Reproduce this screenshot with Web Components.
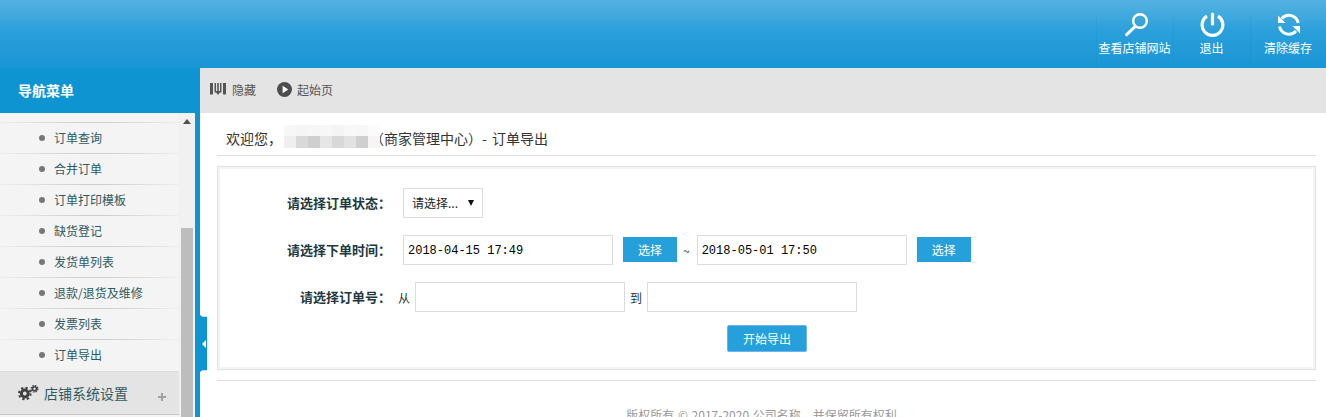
<!DOCTYPE html>
<html lang="zh-CN">
<head>
<meta charset="utf-8">
<title>订单导出</title>
<style>
html,body{margin:0;padding:0;height:417px;overflow:hidden;background:#fff;font-family:"Noto Sans CJK SC","Liberation Sans",sans-serif;}
</style>
</head>
<body>
<admin-app>
  <top-bar slot="top">
    <top-action label="查看店铺网站"><svg viewBox="0 0 26 26" width="26" height="26" fill="none" stroke="#fff"><circle cx="18" cy="9" r="6.8" stroke-width="2.4"/><path d="M12.8 14.8 4.6 22.6" stroke-width="3" stroke-linecap="round"/></svg></top-action>
    <top-action label="退出"><svg viewBox="0 0 26 26" width="26" height="26" fill="none" stroke="#fff" stroke-width="3.2"><path d="M8 4.2A10.4 10.4 0 1 0 19 4.2"/><path d="M13.5 2v10" stroke-linecap="round"/></svg></top-action>
    <top-action label="清除缓存"><svg viewBox="0 0 26 26" width="26" height="26" fill="none" stroke="#fff" stroke-width="3"><path d="M6.8 6.5A9.5 9.5 0 0 1 23.2 11"/><path d="M4.6 14.5A9.5 9.5 0 0 0 21 19"/><path d="M3 3.5V11h7.5z" fill="#fff" stroke="none"/><path d="M25 21.5V14h-7.5z" fill="#fff" stroke="none"/></svg></top-action>
  </top-bar>
  <side-bar slot="side">
    <side-item>订单查询</side-item>
    <side-item>合并订单</side-item>
    <side-item>订单打印模板</side-item>
    <side-item>缺货登记</side-item>
    <side-item>发货单列表</side-item>
    <side-item>退款/退货及维修</side-item>
    <side-item>发票列表</side-item>
    <side-item>订单导出</side-item>
    <side-group>店铺系统设置</side-group>
  </side-bar>
  <tool-bar slot="tools">
    <tool-link gap="6" pad="10"><svg viewBox="0 0 16 16" width="16" height="16" fill="#555"><path d="M0 1h3v11.5H0zM4.5 1H6v9.5H4.500zM10 1h1.500v9.500H10zM13 1h3v11.500h-3zM7.200 1h1.600v8H11l-3 4-3-4h2.200z"/></svg>隐藏</tool-link>
    <tool-link gap="5" pad="21"><svg viewBox="0 0 16 16" width="15" height="15"><circle cx="8" cy="8" r="8" fill="#4d4d4d"/><path d="M6 4l6 4-6 4z" fill="#fff"/></svg>起始页</tool-link>
  </tool-bar>
  <page-title slot="main"><mosaic-block></mosaic-block></page-title>
  <export-form slot="main">
    <form-row label="请选择订单状态：">
      <select-box>请选择...</select-box>
    </form-row>
    <form-row label="请选择下单时间：">
      <text-field value="2018-04-15 17:49"></text-field>
      <action-button style="margin-left:10px">选择</action-button>
      <plain-text style="margin:0 7px 0 6px">~</plain-text>
      <text-field value="2018-05-01 17:50"></text-field>
      <action-button style="margin-left:10px">选择</action-button>
    </form-row>
    <form-row label="请选择订单号：" tight>
      <plain-text style="margin-right:5px">从</plain-text>
      <text-field></text-field>
      <plain-text style="margin:0 5px">到</plain-text>
      <text-field></text-field>
    </form-row>
    <submit-row><action-button primary>开始导出</action-button></submit-row>
  </export-form>
  <page-footer slot="main">版权所有 © 2017-2020 公司名称，并保留所有权利</page-footer>
</admin-app>
<script>
function def(name, css, html, extra){
  customElements.define(name, class extends HTMLElement{
    constructor(){super();const r=this.attachShadow({mode:'open'});r.innerHTML='<style>'+css+'</style>'+html;}
    connectedCallback(){ if(extra) extra.call(this,this.shadowRoot); }
  });
}
def('admin-app',`
 :host{display:block;width:1326px;height:417px;overflow:hidden;position:relative}
 .body{display:flex;height:349px}
 .side{width:195px;flex:none}
 .strip{width:5px;background:#0f94d2;flex:none}
 .right{flex:1;min-width:0;display:flex;flex-direction:column}
 .main{padding:0 10px 0 17px;display:flex;flex-direction:column}
 .flap{position:absolute;left:200px;top:315px;width:7px;height:57px;background:#0f94d2;clip-path:polygon(0 0,35% 3%,100% 3%,100% 97%,35% 97%,0 100%)}
 .flap::after{content:"";position:absolute;left:2px;top:25px;border:4px solid transparent;border-right:4px solid #fff;border-left:0}
`,`<slot name="top"></slot><div class="body"><div class="side"><slot name="side"></slot></div><div class="strip"></div><div class="right"><slot name="tools"></slot><div class="main"><slot name="main"></slot></div></div></div><div class="flap"></div>`);
def('top-bar',`
 :host{display:flex;justify-content:flex-end;height:68px;background:linear-gradient(#55b2e1,#2ba0da 45%,#1a96d4);}
`,`<slot></slot>`);
def('top-action',`
 :host{display:flex;flex-direction:column;align-items:center;width:77px;height:68px;box-sizing:border-box;color:#fff;font-size:12px;padding-top:12px;background:linear-gradient(rgba(0,80,140,.07),rgba(0,80,140,.07)) left 15px/1px 53px no-repeat}
 :host(:last-child){width:76px}
 .i{height:26px;width:26px;display:block}
 .t{line-height:16px;margin-top:2px;white-space:nowrap}
`,`<div class="i"><slot></slot></div><div class="t"></div>`,function(r){r.querySelector('.t').textContent=this.getAttribute('label');});
def('side-bar',`
 :host{display:flex;flex-direction:column;height:349px;overflow:hidden}
 .h{height:45px;flex:none;background:#0f94d2;color:#fff;font-weight:700;font-size:14px;line-height:45px;padding-left:18px}
 .b{flex:1;display:flex;min-height:0}
 .l{width:179px;flex:none;background:#f4f4f4;padding-top:9px;box-sizing:border-box;overflow:hidden}
 .s{flex:1;background:#f1f1f1;position:relative;display:flex;flex-direction:column;align-items:center}
 .a{width:0;height:0;border:4.5px solid transparent;border-bottom:5px solid #505050;border-top:0;margin:6px 0 0 0}
 .t{position:absolute;left:2px;right:2px;top:115px;bottom:0;background:#bdbdbd}
`,`<div class="h">导航菜单</div><div class="b"><div class="l"><slot></slot></div><div class="s"><div class="a"></div><div class="t"></div></div></div>`);
const sep='linear-gradient(to right,rgba(200,200,200,0.15),#cfcfcf 45%,#cfcfcf 60%,rgba(200,200,200,0.15))';
def('side-item',`
 :host{display:flex;align-items:center;height:31px;box-sizing:border-box;padding-left:39px;font-size:12px;color:#2f5a60;background:${sep} top left/100% 1px no-repeat;}
 i{width:6px;height:6px;border-radius:50%;background:#777;margin-right:10px;margin-left:0;flex:none}
 span{margin-left:-1px}
`,`<i></i><span><slot></slot></span>`);
def('side-group',`
 :host{display:flex;align-items:center;height:44px;box-sizing:border-box;margin-top:1px;padding-left:18px;font-size:14px;color:#2f5a60;background:#e4e4e4;border-top:1px solid #dcdcdc;border-bottom:1px solid #c8c8c8;position:relative}
 svg{margin-right:4px;flex:none}
 b{position:absolute;left:158px;top:21px;width:8px;height:8px;background:linear-gradient(#a0a0a0,#a0a0a0) center/8px 2px no-repeat,linear-gradient(#a0a0a0,#a0a0a0) center/2px 8px no-repeat}
`,`<svg viewBox="0 0 22 16" width="22" height="16"><g fill="none" stroke="#404040"><circle cx="6.800" cy="8.500" r="3.400" stroke-width="3"/><circle cx="6.800" cy="8.500" r="5.800" stroke-width="2" stroke-dasharray="2.300 2.250"/><circle cx="16.500" cy="3.800" r="2" stroke-width="1.600"/><circle cx="16.500" cy="3.800" r="3.300" stroke-width="1.300" stroke-dasharray="1.500 1.090"/></g></svg><slot></slot><b></b>`);
def('tool-bar',`
 :host{display:flex;align-items:center;height:45px;flex:none;background:#e4e4e4;color:#555;font-size:12px}
`,`<slot></slot>`);
def('tool-link',`
 :host{display:inline-flex;align-items:center;height:45px;white-space:nowrap}
 span{display:flex;align-items:center;margin-top:-2px}
`,`<span><slot></slot></span>`,function(r){
  this.style.paddingLeft=this.getAttribute('pad')+'px';
  r.querySelector('span').style.gap=this.getAttribute('gap')+'px';
});
def('page-title',`
 :host{display:flex;align-items:center;height:43px;box-sizing:border-box;padding:7px 0 0 9px;border-bottom:1px solid #ddd;font-size:14px;color:#333;white-space:nowrap}
 .r{margin-left:-10px;word-spacing:2px}
`,`<span>欢迎您，</span><slot></slot><span class="r">（商家管理中心）- 订单导出</span>`);
def('mosaic-block',`
 :host{display:grid;grid-template-columns:repeat(8,12px);grid-template-rows:11px 12px;margin-left:2px;margin-top:-2px;position:relative;z-index:1}
 i{display:block}
`,['#f7f7f7','#f5f5f5','#f6f6f6','#f7f7f7','#f4f4f4','#f8f8f8','#f7f7f7','#fbfbfb','#efefef','#d9d9d9','#cfcfcf','#e6e6e6','#d8d8d8','#e2e2e2','#cfcfcf','#f5f5f5'].map(c=>'<i style="background:'+c+'"></i>').join(''));
def('export-form',`
 :host{display:flex;flex-direction:column;gap:17px;box-sizing:border-box;height:204px;margin-top:10px;padding:21px 0 0 0;border:1px solid #e2e2e2;box-shadow:inset 0 0 0 2px #f4f4f4;}
`,`<slot></slot>`);
def('form-row',`
 :host{display:flex;align-items:center;height:30px;font-size:12px;color:#22383f}
 .l{width:171px;flex:none;margin-left:2px;margin-bottom:2px;text-align:right;font-weight:700;font-size:13px;white-space:nowrap;margin-right:12px}
 :host([tight]) .l{margin-right:7px}
`,`<div class="l"></div><slot></slot>`,function(r){r.querySelector('.l').textContent=this.getAttribute('label');});
def('select-box',`
 :host{display:flex;align-items:center;justify-content:space-between;width:80px;height:30px;box-sizing:border-box;border:1px solid #dcdcdc;padding:0 8px 2px 8px;font-size:12px;color:#222;background:#fff}
 i{border:3.500px solid transparent;border-top:6px solid #111;border-bottom:0;width:0;height:0;margin-top:2px}
`,`<slot></slot><i></i>`);
def('text-field',`
 :host{display:block;width:210px;height:30px;flex:none;box-sizing:border-box;border:1px solid #dcdcdc;background:#fff;padding:1px 0 0 4px;font:12px/29px "Liberation Mono",monospace;color:#000;white-space:nowrap}
`,`<span></span>`,function(r){r.querySelector('span').textContent=this.getAttribute('value')||'';});
def('plain-text',`:host{font-size:12px;color:#22383f;display:inline-block}`,`<slot></slot>`);
def('action-button',`
 :host{display:flex;align-items:center;justify-content:center;width:54px;height:25px;margin-bottom:1px;flex:none;background:#26a0da;color:#fff;font-size:12px}
 :host([primary]){width:80px;height:27px;margin-bottom:0;box-sizing:border-box;border:1px solid #6eb2f2;border-radius:2px}
`,`<slot></slot>`);
def('submit-row',`
 :host{display:flex;margin:-4px 0 0 509px}
`,`<slot></slot>`);
def('page-footer',`
 :host{display:block;margin-top:10px;border-top:1px solid #ddd;padding-top:25px;text-align:center;font-size:12px;line-height:18px;color:#999;white-space:nowrap;padding-right:10px;word-spacing:1px}
`,`<slot></slot>`);
</script>
</body>
</html>
